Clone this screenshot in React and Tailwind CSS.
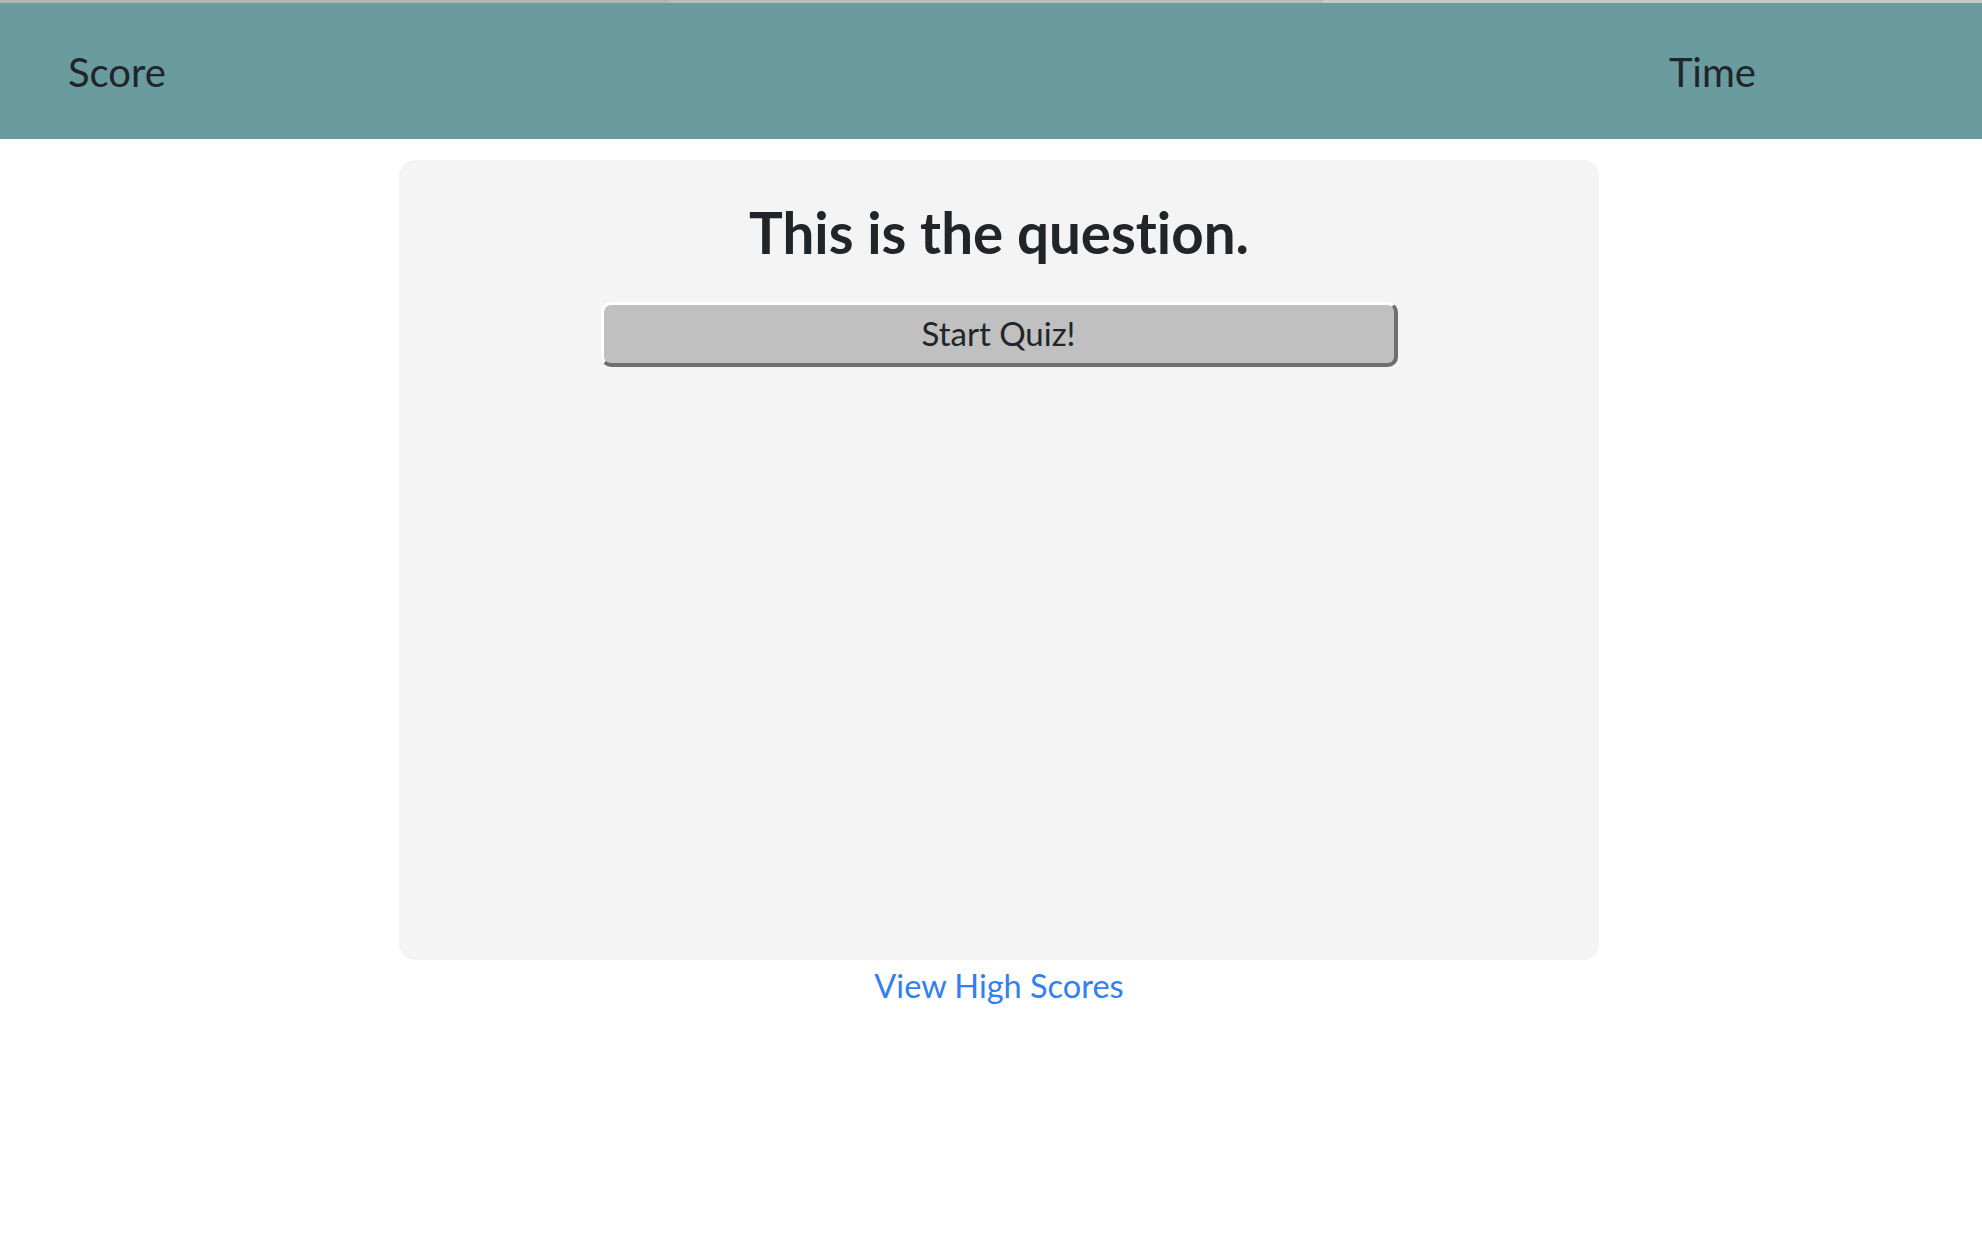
export default function App() {
  return (
    <div className="min-h-[1254px] bg-white text-[#212529] [font-variant-ligatures:none]" style={{ fontFamily: 'Lato, "Noto Sans", sans-serif' }}>
      <div className="flex h-[3px] w-full">
        <div className="w-[670px] bg-[#b4b4b4]" />
        <div className="w-[653px] bg-[#bcbcbc]" />
        <div className="flex-1 bg-[#c9c9c9]" />
      </div>
      <header className="flex h-[136px] items-center justify-between bg-[#6a9b9e] pt-[2px] pl-[68px] pr-[226px]">
        <span className="text-[40px] leading-[1.2]">Score</span>
        <span className="text-[40px] leading-[1.2]">Time</span>
      </header>
      <main className="flex flex-col items-center pl-4">
        <section className="mt-[21px] flex h-[800px] w-[1200px] flex-col items-center rounded-[16px] bg-[#f4f4f4] pt-[39px]">
          <h1 className="text-[56.5px] font-bold leading-[1.2]">This is the question.</h1>
          <button className="mt-[35px] flex h-[65px] w-[797px] items-center justify-center rounded-[10px] border-t-[3px] border-r-[4px] border-b-[4px] border-l-[3px] border-t-white border-l-white border-r-[#6e6e6e] border-b-[#6e6e6e] bg-[#c0c0c0] text-[33px] leading-[1.2] text-[#212529]">
            Start Quiz!
          </button>
        </section>
        <a href="#" className="mt-[6px] text-[32.5px] leading-[1.2] text-[#2f80f2]">
          View High Scores
        </a>
      </main>
    </div>
  );
}
